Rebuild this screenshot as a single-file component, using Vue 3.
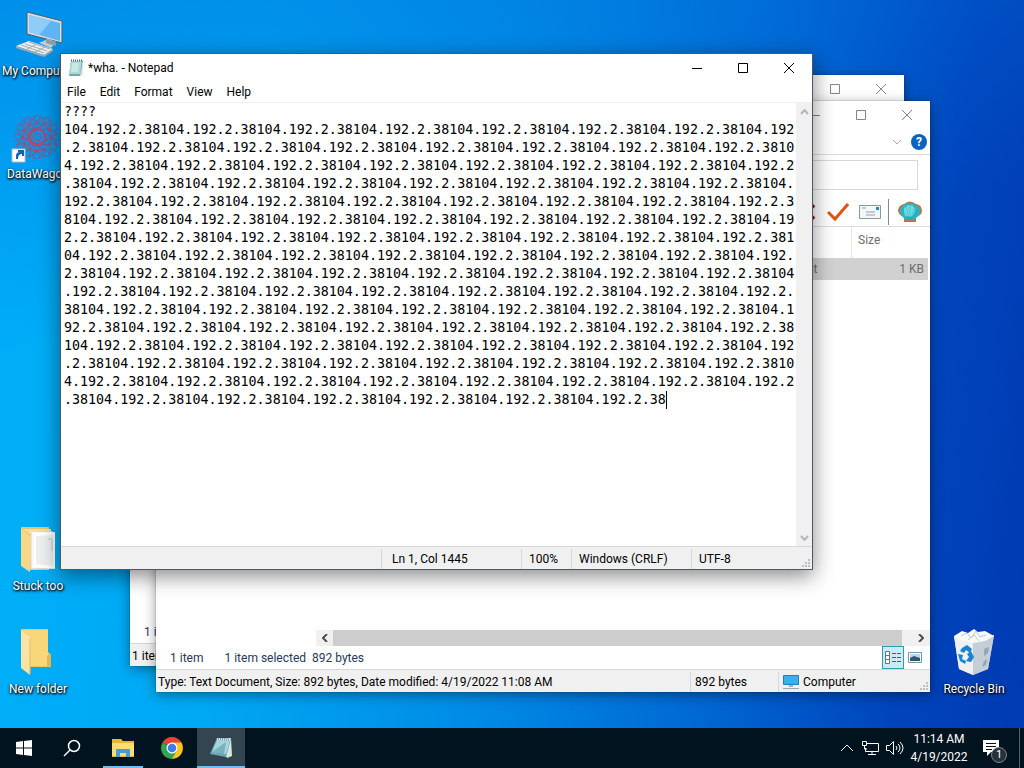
<script setup>
import { computed, ref } from "vue";

const charsPerLine = 91;
const address = "104.192.2.38";
const firstLine = "????";

const note = ref(`${firstLine}\n${address.repeat(120)}`);

const caret = computed(() => {
  const rest = note.value.length - firstLine.length - 1;
  return {
    left: `${rest % charsPerLine}ch`,
    top: `${(Math.floor(rest / charsPerLine) + 1) * 18}px`,
  };
});

const menus = ["File", "Edit", "Format", "View", "Help"];

const icons = [
  { name: "My Computer", kind: "computer" },
  { name: "DataWagon", kind: "wagon" },
  { name: "Stuck too", kind: "full" },
  { name: "New folder", kind: "folder" },
  { name: "Recycle Bin", kind: "bin" },
];

const explorers = [
  {
    id: "back",
    files: [],
    selected: "",
    details: "1 item",
    bytes: "",
  },
  {
    id: "front",
    files: [{ type: "Text Document", size: "1 KB" }],
    selected: "1 item selected\u00a0 892 bytes",
    details:
      "Type: Text Document, Size: 892 bytes, Date modified: 4/19/2022 11:08 AM",
    bytes: "892 bytes",
  },
];

const rays = [0, 30, 60, 90, 120, 150];
</script>

<template>
  <div class="screen">
    <main class="desktop">
      <div class="icons">
        <a
          v-for="icon in icons"
          :key="icon.name"
          href="#"
          class="icon"
          :class="icon.kind"
        >
          <svg v-if="icon.kind === 'computer'" width="48" height="48">
            <path d="M13 2l35 9v22L13 24z" fill="#d5dde2" />
            <path d="M13 2l35 9v22L13 24z" fill="none" stroke="#46616f" />
            <path d="M15 5l31 8v18L15 22z" fill="#5fb5f4" />
            <path d="M15 5l22 6-12 14-10-3z" fill="#8fcdf8" />
            <path d="M25 33l9-4 8 3-5 6z" fill="#c4ccd0" />
            <path d="M32 29l10 3v4l-10-3z" fill="#8e9da5" />
            <path d="M2 36l13-5 24 8-9 6z" fill="#eceff0" />
            <path d="M2 36l28 9 9-6v2l-9 6-28-9z" fill="#9caab1" />
            <path
              d="M7 35l23 8M11 34l22 7M15 32l21 7M13 39l10-5M21 42l10-5"
              stroke="#a4adb2"
            />
          </svg>
          <svg v-else-if="icon.kind === 'wagon'" width="48" height="48">
            <g fill="none" stroke="#7b5a95" transform="translate(23 24)">
              <g v-for="ray in rays" :key="ray" :transform="`rotate(${ray})`">
                <ellipse rx="8" ry="22" stroke-opacity=".7" />
                <path
                  d="M-4-22L0-13l4-9M-4 22L0 13l4 9M-17 0l17 7 17-7"
                  stroke="#a04c70"
                  stroke-opacity=".8"
                />
              </g>
              <circle r="14" stroke="#ad4966" />
              <circle r="8" stroke="#b4486a" stroke-width="2" />
              <circle r="4" fill="#168fda" stroke="#ad4966" />
            </g>
            <path d="M-2 36h13v13H-2z" fill="#fff" stroke="#b5c0c5" />
            <path d="M2 46v-3q0-4 4-4H4v-2h6v6H8v-2q-4 0-4 5z" fill="#1461b5" />
          </svg>
          <svg v-else-if="icon.kind === 'full'" width="48" height="48">
            <path d="M7 2h28v43H12z" fill="#e9c568" />
            <path d="M9 4h28v6H17z" fill="#f9dda0" />
            <path d="M17 6l22 1v36l-22 1z" fill="#f6f7f6" stroke="#d9dada" />
            <path d="M20 8l21-1v37l-21-2z" fill="#fff" />
            <path d="M22 11l17-1v31l-17-2z" fill="#edf0ef" />
            <path d="M34 14h4v12" fill="none" stroke="#bfc6c5" />
            <path d="M7 3l10 9-1 35-9-6z" fill="#f8d887" />
          </svg>
          <svg v-else-if="icon.kind === 'folder'" width="48" height="48">
            <path d="M7 1h27v24l3 2v12H16z" fill="#ecc85c" />
            <path d="M8 2h26v22l3 3v11H16V10z" fill="#f7d779" />
            <path d="M35 26h2v12h-4V28z" fill="#e4b64b" />
            <path d="M7 2l10 8-1 37-9-7z" fill="#fbe4a3" />
            <path d="M16 10v36" stroke="#dfb85c" />
          </svg>
          <svg v-else width="48" height="48">
            <path d="M4 8l40-1-6 34-15 6-14-6z" fill="#d7dee3" />
            <path d="M4 8l19 4v35L9 41z" fill="#eef1f3" />
            <path d="M23 12l21-5-6 34-15 6z" fill="#c5ced5" />
            <path
              d="M4 8l8-5 6 2 6-4 4 3 7-1 9 5-9 5-11 2-12-2z"
              fill="#f8fafa"
            />
            <path
              d="M11 8l6-3 4 5 5-7 4 6 6-2M18 12l6-5 5 6"
              fill="none"
              stroke="#c2cacd"
            />
            <path d="M34 21l5-2-1 6-4 3zM34 33l3-2-1 6-4 2z" fill="#8ea8bb" />
            <g fill="#1683d4">
              <path d="M12 20l5-3 5 4-2 4-4-3-2 3-4-2z" />
              <path d="M21 23l3 6-3 5-5-1 3-4-2-3z" />
              <path d="M8 26l5 1-1 4 4 2-1 3-5-3z" />
            </g>
          </svg>
          <span>{{ icon.name }}</span>
        </a>
      </div>

      <section
        v-for="win in explorers"
        :key="win.id"
        class="window explorer"
        :class="win.id"
      >
        <header class="titlebar">
          <button class="control" aria-label="Minimize">
            <svg width="10" height="10"><path d="M0 5.5h10" /></svg>
          </button>
          <button class="control" aria-label="Maximize">
            <svg width="10" height="10"><path d="M.5.5h9v9h-9z" /></svg>
          </button>
          <button class="control" aria-label="Close">
            <svg width="10" height="10"><path d="M0 0l10 10M10 0L0 10" /></svg>
          </button>
        </header>
        <div class="ribbon">
          <button aria-label="Expand the ribbon">
            <svg width="10" height="6">
              <path d="M1 1l4 4 4-4" fill="none" stroke="#a9a9a9" />
            </svg>
          </button>
          <button class="help" aria-label="Help">?</button>
        </div>
        <div class="search">
          <input type="search" aria-label="Search" />
        </div>
        <div class="tools">
          <button aria-label="Delete">
            <svg width="22" height="20">
              <path
                d="M3 3l16 14M19 3L3 17"
                stroke="#8c1422"
                stroke-width="4"
              />
            </svg>
          </button>
          <button aria-label="Rename">
            <svg width="22" height="20">
              <path
                d="M1 10l7 7L21 2"
                fill="none"
                stroke="#dc5714"
                stroke-width="3"
              />
            </svg>
          </button>
          <button aria-label="Properties">
            <svg width="22" height="14">
              <path d="M.5.5h21v13H.5z" fill="#f4f7f8" stroke="#8b979d" />
              <path d="M3 3h4M7 7h9M7 10h9" stroke="#8d9da8" />
              <path d="M17 2h3v3h-3z" fill="#2387b7" />
            </svg>
          </button>
          <span class="divider"></span>
          <button aria-label="Classic Shell">
            <svg width="24" height="22">
              <path
                d="M6 16Q0 14 0 9q1-5 6-6 6-5 12 0 6 1 6 7 0 4-6 6v5H6z"
                fill="#b9754c"
              />
              <path
                d="M6 17Q1 14 2 8q4-6 10-6t10 6q1 6-4 9l-3 2H9z"
                fill="#2ab5c0"
              />
              <path d="M7 15Q4 8 8 5q6-3 9 2 0 6-4 9z" fill="#6bdce0" />
              <path
                d="M4 8l7 10M8 4l3 14M12 3v15M17 4l-4 14M21 8l-7 10"
                fill="none"
                stroke="#168d9d"
                stroke-opacity=".3"
              />
            </svg>
          </button>
        </div>
        <div class="files">
          <table v-if="win.files.length">
            <thead>
              <tr>
                <th>Type</th>
                <th>Size</th>
              </tr>
            </thead>
            <tbody>
              <tr v-for="file in win.files" :key="file.type">
                <td>{{ file.type }}</td>
                <td>{{ file.size }}</td>
              </tr>
            </tbody>
          </table>
        </div>
        <div class="hscroll">
          <button aria-label="Scroll left">
            <svg width="6" height="8">
              <path
                d="M5 0L1 4l4 4"
                fill="none"
                stroke="#505050"
                stroke-width="2"
              />
            </svg>
          </button>
          <span class="thumb"></span>
          <button aria-label="Scroll right">
            <svg width="6" height="8">
              <path
                d="M1 0l4 4-4 4"
                fill="none"
                stroke="#505050"
                stroke-width="2"
              />
            </svg>
          </button>
        </div>
        <div class="summary">
          <span>1 item</span>
          <span>{{ win.selected }}</span>
          <button class="view current" aria-label="Details view">
            <svg width="16" height="14">
              <path
                d="M.5.5h4v12h-4zM.5 4.5h4M.5 8.5h4"
                fill="#fff"
                stroke="#66757c"
              />
              <path
                d="M7 2.5h4M12 2.5h4M7 6.5h4M12 6.5h4M7 10.5h4M12 10.5h4"
                stroke="#4b5c64"
              />
            </svg>
          </button>
          <button class="view" aria-label="Thumbnail view">
            <svg width="14" height="12">
              <path d="M.5.5h13v10H.5z" fill="#fff" stroke="#7996a8" />
              <path d="M2 2h10v7H2z" fill="#b7d8ee" />
              <path d="M2 6l4-2 6 2v3H2z" fill="#34576f" />
            </svg>
          </button>
        </div>
        <footer class="status">
          <span class="details">{{ win.details }}</span>
          <span class="bytes">{{ win.bytes }}</span>
          <span class="place">
            <svg width="16" height="16">
              <path d="M.5 1.5h15v9H.5z" fill="#36b0ee" stroke="#277fac" />
              <path d="M6 11h4v2H6z" fill="#9eb1ba" />
              <path d="M0 14.5h16" stroke="#98a9b1" />
            </svg>
            Computer
          </span>
          <svg class="grip" width="8" height="8">
            <path d="M6 0h2v2H6zM3 3h2v2H3zM6 3h2v2H6zM0 6h2v2H0zM3 6h2v2H3zM6 6h2v2H6z" />
          </svg>
        </footer>
      </section>

      <section class="window notepad">
        <header class="titlebar">
          <svg class="app" width="16" height="18">
            <path d="M3 2h12l-2 15H1z" fill="#77a9aa" />
            <path d="M3 2h11l-2 13H1z" fill="#a9d8d6" />
            <path d="M4 4h7l-1 9H3z" fill="#c5e8e5" />
            <path d="M15 3v13l-3 1z" fill="#dfe7e7" />
            <path
              d="M3 1.5h12"
              stroke="#49686d"
              stroke-dasharray="1 1"
              stroke-width="2"
            />
          </svg>
          <h1>*wha. - Notepad</h1>
          <button class="control" aria-label="Minimize">
            <svg width="10" height="10"><path d="M0 5.5h10" /></svg>
          </button>
          <button class="control" aria-label="Maximize">
            <svg width="10" height="10"><path d="M.5.5h9v9h-9z" /></svg>
          </button>
          <button class="control" aria-label="Close">
            <svg width="10" height="10"><path d="M0 0l10 10M10 0L0 10" /></svg>
          </button>
        </header>
        <nav class="menu">
          <button v-for="menu in menus" :key="menu">{{ menu }}</button>
        </nav>
        <div class="editor">
          <div class="paper">
            <textarea
              v-model="note"
              aria-label="Text"
              spellcheck="false"
            ></textarea>
            <span class="caret" :style="caret"></span>
          </div>
          <div class="vscroll">
            <button aria-label="Scroll up">
              <svg width="9" height="6">
                <path
                  d="M1 5l3.5-4L8 5"
                  fill="none"
                  stroke="#b5b5b5"
                  stroke-width="2"
                />
              </svg>
            </button>
            <button aria-label="Scroll down">
              <svg width="9" height="6">
                <path
                  d="M1 1l3.5 4L8 1"
                  fill="none"
                  stroke="#b5b5b5"
                  stroke-width="2"
                />
              </svg>
            </button>
          </div>
        </div>
        <footer class="status">
          <span></span>
          <span class="wide">Ln 1, Col 1445</span>
          <span>100%</span>
          <span>Windows (CRLF)</span>
          <span>UTF-8</span>
          <svg class="grip" width="8" height="8">
            <path d="M6 0h2v2H6zM3 3h2v2H3zM6 3h2v2H6zM0 6h2v2H0zM3 6h2v2H3zM6 6h2v2H6z" />
          </svg>
        </footer>
      </section>
    </main>

    <footer class="taskbar">
      <button class="task" aria-label="Start">
        <svg width="16" height="16" fill="#fff">
          <path
            d="M0 2l7-1v6.5H0zM8 1l8-1v7.5H8zM0 8.5h7V15l-7-1zM8 8.5h8V16l-8-1z"
          />
        </svg>
      </button>
      <button class="task" aria-label="Search">
        <svg width="18" height="18" fill="none" stroke="#fff">
          <circle cx="11" cy="7" r="5.5" stroke-width="1.5" />
          <path d="M7 11l-6 6" stroke-width="1.5" />
        </svg>
      </button>
      <div class="pinned">
        <button class="task open" aria-label="File Explorer">
          <svg width="22" height="18">
            <path d="M0 0h9l2 2h11v16H0z" fill="#e8b53b" />
            <path d="M0 4h22v13H0z" fill="#fedc73" />
            <path
              d="M4 18v-7q0-1 1-1h12q1 0 1 1v7h-4v-4H8v4z"
              fill="#479cd5"
            />
          </svg>
        </button>
        <button class="task" aria-label="Google Chrome">
          <svg width="24" height="24" viewBox="-12 -12 24 24">
            <path d="M0 0L-9.5-5.5A11 11 0 0 1 9.5-5.5z" fill="#e64235" />
            <path d="M0 0L9.5-5.5A11 11 0 0 1 0 11z" fill="#fbc51c" />
            <path d="M0 0v11A11 11 0 0 1-9.5-5.5z" fill="#30a552" />
            <path d="M0-5.5h9.5L5 3 0 11l4.8-8.3z" fill="#fbc51c" />
            <path d="M-9.5-5.5L-4.8 2.7 0 5.5l4.8-2.8L0 11z" fill="#30a552" />
            <circle r="5.5" fill="#fff" />
            <circle r="4.3" fill="#3d7de6" />
          </svg>
        </button>
        <button class="task active" aria-label="Notepad">
          <svg width="24" height="22">
            <path d="M8 2l14-1 1 18-5 2z" fill="#d9e7df" />
            <path d="M8 1l14 1-5 18L1 17z" fill="#69a9b7" />
            <path d="M8 3l13 1-4 13-14-2z" fill="#a7d5dd" />
            <path d="M3 15L17 5l-2 12z" fill="#4e929e" fill-opacity=".5" />
            <path
              d="M8 2l14 1"
              stroke="#e4eeef"
              stroke-dasharray="1 1"
              stroke-width="2"
            />
          </svg>
        </button>
      </div>
      <div class="tray">
        <button aria-label="Show hidden icons">
          <svg width="14" height="8"><path d="M1 7l6-6 6 6" /></svg>
        </button>
        <button aria-label="Network">
          <svg width="18" height="16">
            <path
              d="M5 3.5h11.5v8H3.5V8M10 12v3M6 14.5h8M.5 1.5h4v4h-4zM2.5 6v3H5"
            />
          </svg>
        </button>
        <button aria-label="Volume">
          <svg width="18" height="14">
            <path
              d="M.5 4.5h3l4-4v13l-4-4h-3zM10 5q2 2 0 4M12 3q4 4 0 8M14 1q6 6 0 12"
            />
          </svg>
        </button>
        <button class="clock">
          <time>11:14 AM</time><time>4/19/2022</time>
        </button>
        <button class="notices" aria-label="Notifications">
          <svg width="18" height="18">
            <path d="M1 1h16v12H9l-4 4v-4H1z" />
            <path class="lines" d="M4 4.500h10M4 7.500h10M4 10.500h6" />
          </svg>
          <span class="badge">1</span>
        </button>
      </div>
    </footer>
  </div>
</template>

<style>
body {
  background: #0478d7;
}
</style>

<style scoped>
.screen {
  display: flex;
  flex-direction: column;
  height: 100vh;
  min-height: 740px;
  overflow: hidden;
  color: #000;
  font: 12px/16px "Segoe UI", Roboto, "Open Sans", sans-serif;
}

button {
  display: flex;
  align-items: center;
  justify-content: center;
  border: 0;
  background: none;
  padding: 0;
  color: inherit;
  font: inherit;
}

.desktop {
  position: relative;
  flex: 1;
  background:
    linear-gradient(170deg, #0070dc80, transparent 40%),
    linear-gradient(
      97deg,
      #00aff8 0%,
      #00a9f5 25%,
      #008ce6 50%,
      #0069d4 70%,
      #0044bc 88%,
      #003ab2 100%
    );
}

.icons {
  display: grid;
  grid-template-rows: repeat(7, 103px);
  grid-template-columns: 76px 1fr 76px;
  padding-right: 12px;
}

.icon {
  display: flex;
  grid-column: 1;
  flex-direction: column;
  align-items: center;
  gap: 5px;
  padding-top: 10px;
  color: #fff;
  text-decoration: none;
  text-shadow:
    1px 1px 2px #000,
    0 1px 3px #000;
  white-space: nowrap;
}

.icon svg {
  overflow: visible;
}

.full {
  grid-row: 6;
}

.folder {
  grid-row: 7;
}

.bin {
  grid-row: 7;
  grid-column: 3;
}

.window {
  display: flex;
  position: absolute;
  flex-direction: column;
  box-sizing: border-box;
  background: #fff;
}

.explorer {
  box-shadow:
    0 0 1px #0008,
    0 3px 12px #0006;
  width: 774px;
  height: 591px;
}

.back {
  top: 75px;
  left: 130px;
}

.front {
  top: 101px;
  left: 156px;
}

.notepad {
  top: 53px;
  left: 60px;
  border: 1px solid #4b5a62;
  box-shadow: 0 6px 20px #0007;
  width: 753px;
  height: 517px;
}

.titlebar {
  display: flex;
  flex: none;
  align-items: center;
  justify-content: flex-end;
  height: 28px;
}

.app {
  margin: 0 4px 0 7px;
}

h1 {
  flex: 1;
  margin: 0;
  font-weight: 400;
  font-size: 12px;
}

.control {
  width: 46px;
  height: 28px;
}

.control path {
  fill: none;
  stroke: #000;
}

.explorer .control path {
  stroke: #858585;
}

.ribbon {
  display: flex;
  align-items: center;
  justify-content: flex-end;
  gap: 9px;
  border-bottom: 1px solid #dadbdc;
  padding-right: 3px;
  height: 25px;
}

.help {
  border-radius: 50%;
  background: #0a63bd;
  width: 16px;
  height: 16px;
  color: #fff;
  font-weight: 700;
}

.search {
  display: flex;
  justify-content: flex-end;
  padding: 5px 12px 8px 0;
}

.search input {
  box-sizing: border-box;
  border: 1px solid #d9d9d9;
  width: 240px;
  height: 30px;
}

.tools {
  display: flex;
  align-items: center;
  justify-content: flex-end;
  gap: 10px;
  border-bottom: 1px solid #dcdcdc;
  padding-right: 8px;
  height: 28px;
}

.divider {
  margin: 0 -1px 0 -3px;
  background: #878787;
  width: 1px;
  height: 26px;
}

.files {
  display: flex;
  flex: 1;
  justify-content: flex-end;
  align-items: flex-start;
  margin-right: 2px;
}

table {
  border-collapse: collapse;
  width: 612px;
  color: #6d6d6d;
}

th {
  padding: 0 0 5px 6px;
  height: 26px;
  font-weight: 400;
  text-align: left;
}

th:last-child {
  border-left: 1px solid #e5e5e5;
  width: 70px;
}

td {
  background: #d1d1d1;
  padding: 0 4px;
  height: 22px;
  text-align: right;
}

td:first-child {
  padding-right: 34px;
}

th:first-child {
  text-align: center;
}

.hscroll {
  display: flex;
  margin: 0 0 0 160px;
  background: #f0f0f0;
  height: 16px;
}

.hscroll button {
  width: 17px;
}

.hscroll button:last-child {
  width: 28px;
  padding-left: 10px;
}

.thumb {
  flex: 1;
  background: #cdcdcd;
}

.summary {
  display: flex;
  align-items: center;
  gap: 21px;
  padding: 0 4px 0 14px;
  height: 23px;
  color: #26395a;
}

.view {
  box-sizing: border-box;
  width: 22px;
  height: 23px;
}

.view + .view {
  margin-left: -21px;
}

.current {
  margin-left: auto;
  border: 1px solid #26a0b5;
  background: #cbeaf5;
}

.status {
  display: flex;
  position: relative;
  align-items: center;
  box-sizing: border-box;
  border-top: 1px solid #d7d7d7;
  background: #f0f0f0;
  padding-top: 2px;
  height: 23px;
  white-space: nowrap;
}

.details {
  flex: 1;
  padding-left: 2px;
}

.bytes {
  border-left: 1px solid #d7d7d7;
  padding-left: 4px;
  width: 83px;
  height: 20px;
  line-height: 20px;
}

.place {
  display: flex;
  align-items: center;
  gap: 4px;
  border-left: 1px solid #d7d7d7;
  padding-left: 4px;
  width: 147px;
  height: 20px;
}

.grip {
  position: absolute;
  right: 2px;
  bottom: 2px;
  fill: #bfbfbf;
}

.menu {
  display: flex;
  gap: 14px;
  padding: 0 6px;
  height: 20px;
}

.editor {
  display: flex;
  flex: 1;
  border-top: 1px solid #f0f0f0;
}

.paper {
  position: relative;
  flex: 1;
  padding-left: 3px;
  font: 10pt/18px Consolas, "DejaVu Sans Mono", monospace;
}

textarea {
  display: block;
  border: 0;
  outline: 0;
  background: none;
  padding: 0;
  width: 100%;
  height: 100%;
  overflow: hidden;
  resize: none;
  color: #000;
  font: inherit;
  line-break: anywhere;
}

.caret {
  position: absolute;
  margin-left: 3px;
  background: #000;
  width: 1px;
  height: 18px;
}

.vscroll {
  display: flex;
  flex-direction: column;
  justify-content: space-between;
  background: #f0f0f0;
  width: 16px;
}

.vscroll button {
  height: 17px;
}

.notepad .status {
  display: grid;
  grid-template-columns: 320px 140px 50px 120px 1fr;
}

.notepad .status span:not(:first-child) {
  border-left: 1px solid #d7d7d7;
  padding-left: 7px;
  height: 20px;
  line-height: 20px;
}

.notepad .status span.wide:nth-child(2) {
  padding-left: 10px;
}

.taskbar {
  display: flex;
  flex: none;
  background: #00131f;
  height: 40px;
  color: #fff;
}

.task {
  box-sizing: border-box;
  width: 48px;
  height: 40px;
}

.pinned {
  display: flex;
  gap: 1px;
  padding-left: 3px;
}

.open {
  background: linear-gradient(#76b9ed, #76b9ed) center bottom / 40px 2px
    no-repeat;
}

.active {
  border-bottom: 2px solid #76b9ed;
  background: #354550;
  padding-top: 2px;
}

.tray {
  display: flex;
  margin-right: 4px;
  margin-left: auto;
  border-right: 1px solid #52606c;
}

.tray button {
  width: 24px;
}

.tray path {
  fill: none;
  stroke: #fff;
}

.tray .clock {
  flex-direction: column;
  width: 64px;
  line-height: 18px;
}

.tray .notices {
  position: relative;
  box-sizing: border-box;
  padding-right: 8px;
  width: 48px;
}

.tray .notices path {
  fill: #fff;
  stroke: none;
}

.tray .notices .lines {
  stroke: #00101c;
}

.badge {
  position: absolute;
  right: 12px;
  bottom: 5px;
  border: 1px solid #7a858d;
  border-radius: 50%;
  background: #26313b;
  width: 14px;
  height: 14px;
  font-size: 11px;
  line-height: 14px;
}
</style>
